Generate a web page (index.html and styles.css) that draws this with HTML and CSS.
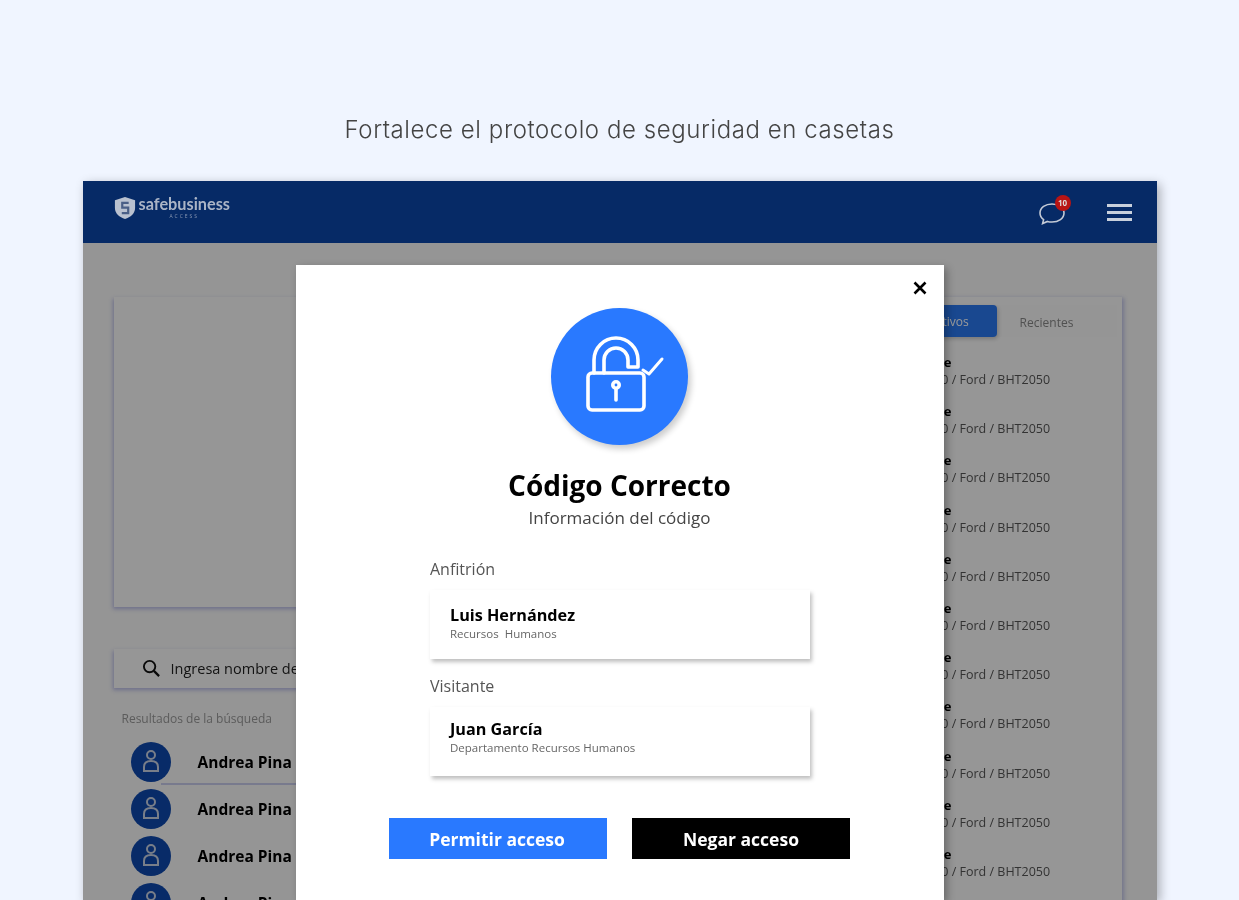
FILE: index.html
```html
<!DOCTYPE html>
<html lang="es">
<head>
    <meta charset="UTF-8">
    <meta name="viewport" content="width=device-width, initial-scale=1.0">
    <link rel="stylesheet" href="styles.css">
    <title>Safebusiness Access</title>
</head>
<body>
    <h1 class="tagline">Fortalece el protocolo de seguridad en casetas</h1>

    <div class="app">
        <header class="topbar">
            <div class="logo">
                <svg class="logo-mark" viewBox="0 0 24 26" aria-hidden="true">
                    <path d="M12 1 L23 4.5 V13 C23 19 18 23 12 25 C6 23 1 19 1 13 V4.5 Z" fill="#b9c1cf"/>
                    <path d="M16 7.5 H9 V12.5 H15.5 V18.5 H8.5" fill="none" stroke="#4a5f86" stroke-width="2.4"/>
                </svg>
                <div class="logo-text">
                    <span class="logo-name">safebusiness</span>
                    <span class="logo-sub">ACCESS</span>
                </div>
            </div>
            <div class="topbar-actions">
                <div class="chat">
                    <svg class="chat-icon" viewBox="0 0 28 26" aria-hidden="true">
                        <path d="M14 4 C7.5 4 2 7.6 2 13 C2 15.8 3.4 18 5.6 19.6 L4.6 23.6 L9.4 21.4 C11 21.9 12.4 22 14 22 C20.5 22 26 18.4 26 13 C26 7.6 20.5 4 14 4 Z" fill="none" stroke="#c3cad6" stroke-width="1.6"/>
                    </svg>
                    <span class="badge">10</span>
                </div>
                <div class="burger"><span></span><span></span><span></span></div>
            </div>
        </header>

        <main class="content">
            <section class="left-col">
                <div class="map-card"></div>
                <div class="search-card">
                    <svg class="search-icon" viewBox="0 0 20 20" aria-hidden="true">
                        <circle cx="8" cy="8" r="6" fill="none" stroke="#111" stroke-width="2"/>
                        <path d="M12.5 12.5 L18 18" stroke="#111" stroke-width="2.4"/>
                    </svg>
                    <span>Ingresa nombre del visitante</span>
                </div>
                <p class="results-label">Resultados de la búsqueda</p>
                <ul class="results">
                    <li class="result first">
                        <span class="avatar"><svg viewBox="0 0 40 40"><use href="#person"/></svg></span>
                        <b>Andrea Pina</b>
                    </li>
                    <li class="result">
                        <span class="avatar"><svg viewBox="0 0 40 40"><use href="#person"/></svg></span>
                        <b>Andrea Pina</b>
                    </li>
                    <li class="result">
                        <span class="avatar"><svg viewBox="0 0 40 40"><use href="#person"/></svg></span>
                        <b>Andrea Pina</b>
                    </li>
                    <li class="result">
                        <span class="avatar"><svg viewBox="0 0 40 40"><use href="#person"/></svg></span>
                        <b>Andrea Pina</b>
                    </li>
                </ul>
            </section>

            <section class="right-col">
                <div class="tabs">
                    <span class="tab active">Activos</span>
                    <span class="tab">Recientes</span>
                </div>
                <ul class="visits">
                    <li><b>Ana Duarte</b><span>Nissan 2010 / Ford / BHT2050</span></li>
                    <li><b>Ana Duarte</b><span>Nissan 2010 / Ford / BHT2050</span></li>
                    <li><b>Ana Duarte</b><span>Nissan 2010 / Ford / BHT2050</span></li>
                    <li><b>Ana Duarte</b><span>Nissan 2010 / Ford / BHT2050</span></li>
                    <li><b>Ana Duarte</b><span>Nissan 2010 / Ford / BHT2050</span></li>
                    <li><b>Ana Duarte</b><span>Nissan 2010 / Ford / BHT2050</span></li>
                    <li><b>Ana Duarte</b><span>Nissan 2010 / Ford / BHT2050</span></li>
                    <li><b>Ana Duarte</b><span>Nissan 2010 / Ford / BHT2050</span></li>
                    <li><b>Ana Duarte</b><span>Nissan 2010 / Ford / BHT2050</span></li>
                    <li><b>Ana Duarte</b><span>Nissan 2010 / Ford / BHT2050</span></li>
                    <li><b>Ana Duarte</b><span>Nissan 2010 / Ford / BHT2050</span></li>
                </ul>
            </section>
            <div class="backdrop"></div>
        </main>

        <div class="modal">
            <svg class="close" viewBox="0 0 14 14" aria-hidden="true">
                <path d="M1.5 1.5 L12.5 12.5 M12.5 1.5 L1.5 12.5" stroke="#000" stroke-width="2.6"/>
            </svg>
            <div class="lock-circle">
                <svg viewBox="0 0 137 137" aria-hidden="true">
                    <g fill="none" stroke="#fff" stroke-width="3.6" stroke-linejoin="round" stroke-linecap="round">
                        <rect x="37" y="65" width="56" height="37" rx="4"/>
                        <path d="M43 65 V52 A22 22 0 0 1 87 52 V59 H77 V52 A12 12 0 0 0 53 52 V65"/>
                        <path d="M92 62 L98 66 L111 51" stroke-width="3"/>
                        <circle cx="65" cy="77" r="3.2"/>
                        <path d="M65 81 V92"/>
                    </g>
                </svg>
            </div>
            <h2>Código Correcto</h2>
            <p class="subtitle">Información del código</p>

            <div class="people">
                <label>Anfitrión</label>
                <div class="person-card host">
                    <strong>Luis Hernández</strong>
                    <small>Recursos&nbsp; Humanos</small>
                </div>
                <label>Visitante</label>
                <div class="person-card guest">
                    <strong>Juan García</strong>
                    <small>Departamento Recursos Humanos</small>
                </div>
            </div>

            <div class="modal-actions">
                <button class="btn allow">Permitir acceso</button>
                <button class="btn deny">Negar acceso</button>
            </div>
        </div>
    </div>

    <svg class="defs" aria-hidden="true">
        <symbol id="person" viewBox="0 0 40 40">
            <g fill="none" stroke="#c9d2e4" stroke-width="2">
                <circle cx="20" cy="13" r="4"/>
                <path d="M13 29 V25 C13 21 16 19 20 19 C24 19 27 21 27 25 V29 Z"/>
            </g>
        </symbol>
    </svg>
</body>
</html>
```

FILE: styles.css
```css
* {
    box-sizing: border-box;
}

body {
    margin: 0;
    height: 900px;
    overflow: hidden;
    background-color: #f0f5ff;
    font-family: "Open Sans", sans-serif;
    color: #000;
}

ul {
    list-style: none;
    margin: 0;
    padding: 0;
}

.defs {
    display: none;
}

.tagline {
    margin: 0;
    padding-top: 115px;
    height: 181px;
    text-align: center;
    font-family: Inter, sans-serif;
    font-size: 24px;
    line-height: 30px;
    font-weight: 300;
    letter-spacing: 0.58px;
    color: #444;
    filter: blur(0.4px);
}

.app {
    position: relative;
    width: 1074px;
    height: 719px;
    margin: 0 auto;
    box-shadow: 3px 3px 10px rgba(0, 0, 0, 0.3);
}

/* top bar */
.topbar {
    height: 62px;
    background-color: #062a66;
    display: flex;
    align-items: center;
    justify-content: space-between;
    padding: 0 25px 0 31px;
    filter: blur(0.5px);
}

.logo {
    display: flex;
    align-items: flex-start;
    gap: 3px;
    margin-top: -9px;
}

.logo-mark {
    width: 22px;
    height: 26px;
}

.logo-text {
    display: flex;
    flex-direction: column;
    align-items: center;
}

.logo-name {
    font-family: Lato, sans-serif;
    font-weight: 700;
    font-size: 16.3px;
    line-height: 18px;
    color: #aab4c6;
}

.logo-sub {
    font-size: 5px;
    line-height: 6px;
    letter-spacing: 2px;
    color: #8a98b3;
}

.topbar-actions {
    display: flex;
    align-items: center;
    gap: 41px;
}

.chat {
    position: relative;
    width: 28px;
    height: 26px;
    margin-top: 2px;
}

.chat-icon {
    display: block;
    width: 28px;
    height: 26px;
}

.badge {
    position: absolute;
    top: -5px;
    right: -5px;
    width: 16px;
    height: 16px;
    border-radius: 50%;
    background-color: #b81414;
    color: #ddd;
    font-size: 8px;
    line-height: 16px;
    font-weight: 700;
    text-align: center;
}

.burger {
    display: flex;
    flex-direction: column;
    gap: 4px;
    width: 25px;
}

.burger span {
    height: 3px;
    background-color: #c8d0dc;
}

/* dimmed page behind the modal */
.content {
    position: relative;
    height: 657px;
    overflow: hidden;
    display: grid;
    grid-template-columns: 490px 498px;
    gap: 20px;
    padding: 54px 0 0 31px;
    background-color: #f8f8f8;
}

.backdrop {
    position: absolute;
    inset: 0;
    background-color: rgba(0, 0, 0, 0.4);
}

.left-col,
.right-col {
    filter: blur(0.7px);
}

.map-card {
    height: 310px;
    background-color: #fbfbfb;
    box-shadow: -1px 2px 4px rgba(60, 70, 200, 0.35);
}

.search-card {
    height: 39px;
    margin-top: 42px;
    padding-left: 28px;
    display: flex;
    align-items: center;
    gap: 10px;
    font-size: 14.5px;
    color: #222;
    white-space: nowrap;
    background-color: #fbfbfb;
    box-shadow: -1px 2px 4px rgba(60, 70, 200, 0.35);
}

.search-icon {
    width: 19px;
    height: 19px;
    flex-shrink: 0;
}

.results-label {
    margin: 23px 0 0 8px;
    font-size: 12px;
    line-height: 15px;
    color: #999;
}

.results {
    margin-top: 12px;
    padding-left: 17px;
}

.result {
    height: 47px;
    display: flex;
    align-items: center;
    gap: 27px;
    font-size: 15.5px;
}

.avatar {
    width: 40px;
    height: 40px;
    border-radius: 50%;
    background-color: #0e48ad;
    flex-shrink: 0;
}

.avatar svg {
    display: block;
    width: 40px;
    height: 40px;
}

.first {
    background: linear-gradient(rgba(60, 70, 200, 0.25), rgba(60, 70, 200, 0.25)) right bottom / calc(100% - 30px) 2px no-repeat;
}

.right-col {
    height: 640px;
    padding: 8px 5px 0;
    background-color: #fbfbfb;
    box-shadow: 2px 1px 4px rgba(60, 70, 200, 0.3);
}

.tabs {
    display: flex;
    justify-content: flex-end;
    background-color: #f8f8f8;
    height: 32px;
    padding-right: 20px;
}

.tab {
    width: 100px;
    font-size: 12px;
    line-height: 35px;
    text-align: center;
    color: #888;
}

.tab.active {
    width: 95px;
    line-height: 33px;
    border-radius: 4px;
    background-color: #2a78f0;
    color: #fff;
    box-shadow: 1px 2px 4px rgba(0, 0, 0, 0.2);
}

.visits {
    margin-top: 17px;
    padding-left: 249px;
}

.visits li {
    height: 49.2px;
    display: flex;
    flex-direction: column;
    font-size: 12.5px;
    line-height: 17px;
    color: #555;
    white-space: nowrap;
}

.visits b {
    font-size: 13px;
    color: #000;
}

/* modal */
.modal {
    position: absolute;
    top: 84px;
    left: 213px;
    width: 648px;
    height: 635px;
    padding-top: 43px;
    background-color: #fff;
    box-shadow: 3px 3px 8px rgba(0, 0, 0, 0.3);
    display: flex;
    flex-direction: column;
    align-items: center;
}

.modal > * {
    filter: blur(0.4px);
}

.close {
    position: absolute;
    top: 16px;
    right: 17px;
    width: 14px;
    height: 14px;
}

.lock-circle {
    width: 137px;
    height: 137px;
    border-radius: 50%;
    background-color: #2979ff;
    box-shadow: 3px 4px 6px rgba(0, 0, 0, 0.2);
}

.lock-circle svg {
    display: block;
    width: 137px;
    height: 137px;
}

.modal h2 {
    margin: 20px 0 0;
    font-size: 28px;
    line-height: 40px;
    font-weight: 700;
}

.subtitle {
    margin: 3px 0 0;
    font-size: 17px;
    line-height: 20px;
    color: #444;
}

.people {
    width: 380px;
    margin-top: 31px;
    margin-left: 1px;
}

.people label {
    display: block;
    font-size: 16px;
    line-height: 20px;
    color: #555;
}

.person-card {
    height: 69px;
    margin: 11px 0 17px 0;
    width: 380px;
    padding: 14px 20px 0;
    box-shadow: 2px 3px 4px rgba(0, 0, 0, 0.25);
    display: flex;
    flex-direction: column;
}

.person-card.guest {
    padding-top: 11px;
}

.person-card strong {
    font-size: 16.2px;
    line-height: 22px;
}

.person-card small {
    font-size: 11.5px;
    line-height: 16px;
    color: #666;
}

.modal-actions {
    display: flex;
    gap: 25px;
    margin-top: 25px;
}

.btn {
    width: 218px;
    height: 41px;
    border: none;
    font-family: inherit;
    font-size: 17.5px;
    font-weight: 700;
    color: #fff;
}

.allow {
    padding-right: 8px;
    background-color: #2979ff;
}

.deny {
    background-color: #000;
}
```
